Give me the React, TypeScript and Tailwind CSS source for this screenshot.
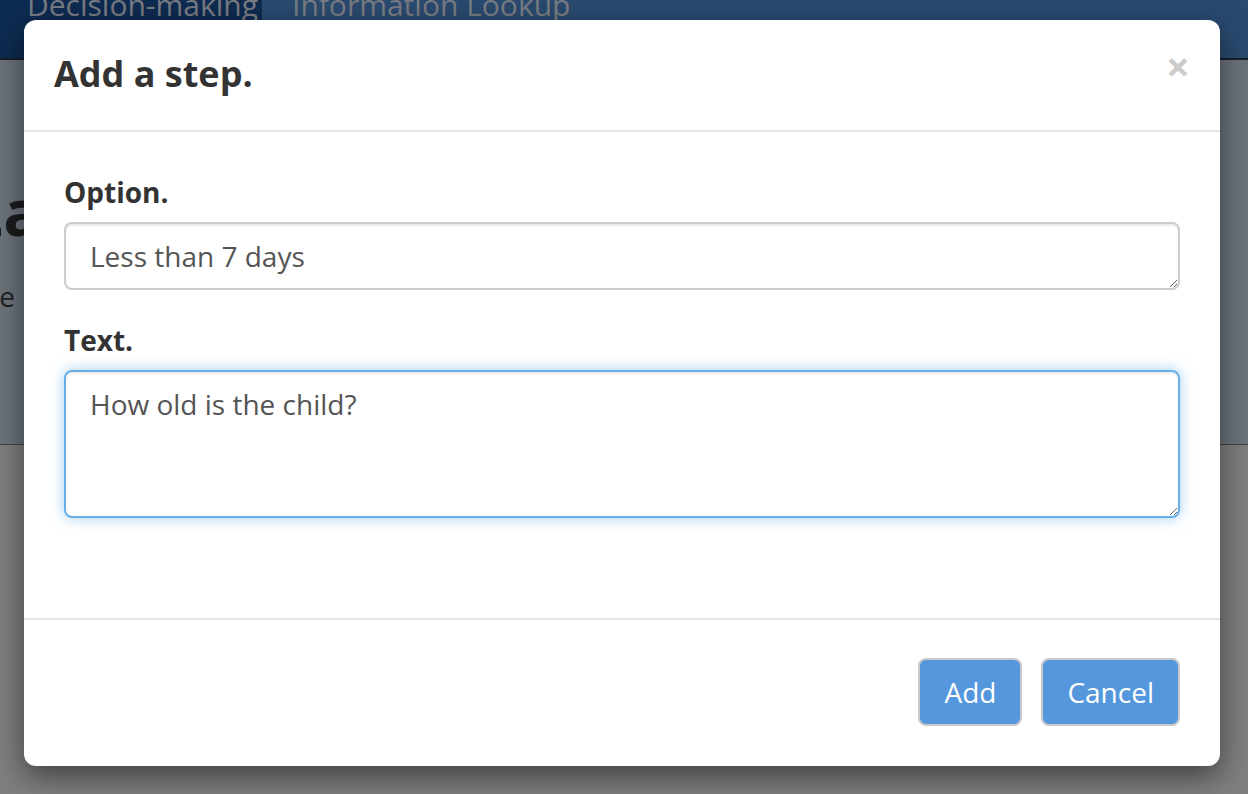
import React from 'react';

const FONT = "font-['Open_Sans',_'Liberation_Sans',_sans-serif]";

function Backdrop() {
  return (
    <div className="flex h-full flex-col">
      <div className="flex h-[60px] shrink-0 border-b-2 border-[#15202c] bg-[#2a4a6f]">
        <div className="w-[262px] overflow-hidden bg-[#0e2b51] pl-[27px]">
          <span className="-mt-[15px] block text-[30px] leading-[40px] text-[#787c83]">Decision-making</span>
        </div>
        <div className="overflow-hidden pl-[30px]">
          <span className="-mt-[15px] block text-[30px] leading-[40px] text-[#787c83]">Information Lookup</span>
        </div>
      </div>
      <div className="h-[385px] shrink-0 overflow-hidden border-b border-[#444] bg-[#6b737b]">
        <div className="-ml-[33px] mt-[112px] text-[64px] font-bold leading-[80px] text-[#1b1c1e]">La</div>
        <div className="-ml-[28px] mt-[24px] text-[28px] leading-[40px] text-[#222]">the list</div>
      </div>
      <div className="flex-1 bg-[#7f7f7f]" />
    </div>
  );
}

function Field({ label, value, tall, focused }: { label: string; value: string; tall?: boolean; focused?: boolean }) {
  return (
    <div className="mb-[30px]">
      <label className="mb-[10px] block text-[28px] font-bold leading-[40px] text-[#333]">{label}</label>
      <textarea
        readOnly
        value={value}
        className={`block w-full rounded-[8px] border-2 bg-white px-[24px] py-[12px] text-[28px] leading-[40px] text-[#555] outline-none ${
          tall ? 'h-[148px]' : 'h-[68px]'
        } ${
          focused
            ? 'border-[#66afe9] shadow-[inset_0_2px_2px_rgba(0,0,0,0.075),0_0_14px_rgba(102,175,233,0.6)]'
            : 'border-[#ccc] shadow-[inset_0_2px_2px_rgba(0,0,0,0.075)]'
        }`}
      />
    </div>
  );
}

export default function App() {
  return (
    <div className={`relative h-[794px] w-[1248px] overflow-hidden ${FONT}`}>
      <Backdrop />
      <div className="absolute left-[24px] top-[20px] flex h-[746px] w-[1196px] flex-col rounded-[12px] bg-white shadow-[0_10px_30px_rgba(0,0,0,0.5)]">
        <div className="flex h-[112px] shrink-0 items-start justify-between border-b-2 border-[#e5e5e5] px-[30px] pt-[28px]">
          <h4 className="text-[36px] font-bold leading-[51px] text-[#333]">Add a step.</h4>
          <button type="button" className="-mt-[3px] text-[42px] font-bold leading-[42px] text-[#cccccc]">
            ×
          </button>
        </div>
        <div className="h-[486px] shrink-0 pl-[40px] pr-[40px] pt-[40px]">
          <Field label="Option." value="Less than 7 days" />
          <Field label="Text." value="How old is the child?" tall focused />
        </div>
        <div className="flex flex-1 items-start justify-end gap-[19px] border-t-2 border-[#e5e5e5] pr-[40px] pt-[38px]">
          <button
            type="button"
            className="h-[68px] rounded-[8px] border-2 border-[#c9c9c9] bg-[#5497dd] px-[24px] text-[28px] leading-[40px] text-white"
          >
            Add
          </button>
          <button
            type="button"
            className="h-[68px] rounded-[8px] border-2 border-[#c9c9c9] bg-[#5497dd] px-[24px] text-[28px] leading-[40px] text-white"
          >
            Cancel
          </button>
        </div>
      </div>
    </div>
  );
}
